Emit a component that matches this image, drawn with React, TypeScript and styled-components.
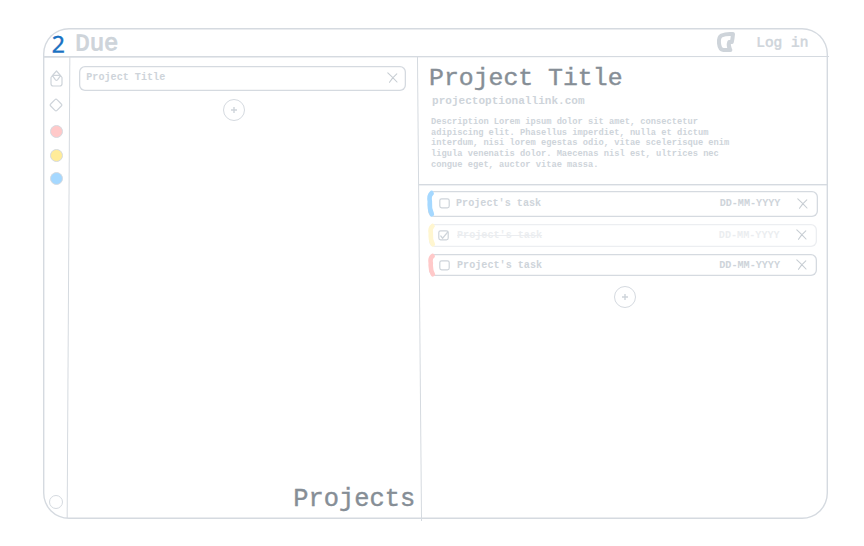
import React from 'react';
import styled, { createGlobalStyle } from 'styled-components';

const line = '#d5dae0';
const ink = '#ced4da';
const dark = '#868e96';

const GlobalStyle = createGlobalStyle`
  * { box-sizing: border-box; }
  body { margin: 0; background: #fff; font-family: "Liberation Mono", monospace; color: ${ink}; }
  h1, h2, p { margin: 0; font-weight: 400; }
`;

const Page = styled.div`
  width: 864px;
  height: 546px;
  padding: 28.4px 36px 27px 42.6px;
`;

const Frame = styled.div`
  width: 785.2px;
  height: 490.4px;
  border-radius: 26px;
  box-shadow: inset 0 0 0 1.4px ${line};
  padding: 1px;
  display: flex;
  flex-direction: column;
`;

const Header = styled.header`
  height: 27.2px;
  flex: none;
  display: flex;
  align-items: center;
  margin-right: -2px;
  box-shadow: 0 1.3px 0 ${line};
  transform: rotate(-0.06deg);
  white-space: pre;
`;

const Count = styled.span`
  width: 23.5px;
  margin-left: 7.8px;
  padding-top: 1px;
  font: 23px/28px "Noto Sans", sans-serif;
  color: #1971c2;
  -webkit-text-stroke: 0.4px #1971c2;
`;

const Brand = styled.span`
  flex: 1;
  font-size: 24px;
  line-height: 28px;
  -webkit-text-stroke: 0.9px ${ink};
  padding-top: 3px;
`;

const Login = styled.span`
  width: 73px;
  margin-left: 19px;
  font-size: 14.5px;
  -webkit-text-stroke: 0.5px ${ink};
`;

const Body = styled.div`
  flex: 1;
  min-height: 0;
  display: flex;
`;

const Rail = styled.aside`
  width: 24.6px;
  display: flex;
  flex-direction: column;
  align-items: center;
  gap: 11.5px;
  padding: 13px 0 8.5px 1px;
  svg { display: block; flex: none; }
`;

const Divider = styled.div<{ $slant: number; $extra?: number }>`
  width: 1.4px;
  flex: none;
  background: ${line};
  margin-bottom: ${p => -(p.$extra ?? 0)}px;
  transform: skewX(${p => p.$slant}deg);
`;

const Dot = styled.div<{ $color: string }>`
  width: 13px;
  height: 13px;
  flex: none;
  border: 1px solid ${line};
  border-radius: 50%;
  background: ${p => p.$color};
`;

const Dots = styled.div`
  display: flex;
  flex-direction: column;
  gap: 10.5px;
  margin-top: 1.5px;
`;

const RailFoot = styled(Dot)`
  margin-top: auto;
  width: 14px;
  height: 14px;
`;

const Projects = styled.section`
  width: 349.6px;
  display: flex;
  flex-direction: column;
  padding: 9.4px 0 0 9.2px;
`;

const ProjectCard = styled.div`
  width: 327px;
  height: 25px;
  flex: none;
  border-radius: 6px;
  box-shadow: inset 0 0 0 1.3px ${line};
  display: flex;
  align-items: center;
  padding: 0 7px 0 7.5px;
`;

const Label = styled.span<{ $struck?: boolean }>`
  flex: 1;
  font-size: 10.15px;
  font-weight: 700;
  line-height: 12px;
  text-decoration: ${p => (p.$struck ? 'line-through' : 'none')};
`;

const AddButton = styled.button<{ $left: number; $top: number }>`
  width: 22px;
  height: 22px;
  flex: none;
  padding: 0;
  display: grid;
  place-items: center;
  border: 1px solid ${line};
  border-radius: 50%;
  background: none;
  margin: ${p => p.$top}px 0 0 ${p => p.$left}px;
`;

const ProjectsTitle = styled.h2`
  margin: auto 0 2px 214.6px;
  font-size: 25.4px;
  line-height: 32px;
  color: ${dark};
  -webkit-text-stroke: 0.4px ${dark};
`;

const Details = styled.section`
  flex: 1;
  min-width: 0;
  margin-left: -1.5px;
  display: flex;
  flex-direction: column;
`;

const Summary = styled.div`
  height: 127.2px;
  flex: none;
  padding: 5.2px 0 0 10px;
  box-shadow: 0 1.4px 0 ${line};
`;

const Title = styled.h1`
  font-size: 24.8px;
  line-height: 32px;
  color: ${dark};
  -webkit-text-stroke: 0.4px ${dark};
`;

const Link = styled.p`
  font-size: 11.05px;
  line-height: 14px;
  margin-left: 3px;
  font-weight: 700;
`;

const Description = styled.p`
  margin: 9px 0 0 2px;
  font-size: 8.72px;
  line-height: 10.8px;
  font-weight: 700;
  white-space: pre;
`;

const Task = styled.div<{ $h: number; $top: number; $w: number; $border: string; $left: number }>`
  width: ${p => p.$w}px;
  height: ${p => p.$h}px;
  flex: none;
  margin: ${p => p.$top}px 0 0 ${p => p.$left}px;
  padding-right: 9px;
  border-radius: 6px;
  box-shadow: inset 0 0 0 1.3px ${p => p.$border};
  display: flex;
  align-items: center;
`;

const Marker = styled.svg`
  width: 8px;
  height: 100%;
  overflow: visible;
  flex: none;
`;

const Check = styled.span<{ $left: number }>`
  width: 11px;
  height: 11px;
  margin: 0 ${p => 8.8 - p.$left}px 0 ${p => p.$left}px;
  flex: none;
  svg { display: block; overflow: visible; }
`;

const TaskText = styled.div<{ $muted: boolean }>`
  flex: 1;
  display: flex;
  padding-top: 0.6px;
  opacity: ${p => (p.$muted ? 0.4 : 1)};
`;

const DateText = styled.span`
  width: 77px;
  font-size: 10.15px;
  font-weight: 700;
  line-height: 12px;
`;

const Cross = () => (
  <svg width="12" height="12" viewBox="0 0 12 12" fill="none" stroke="#c7cdd3" strokeWidth="1.1" strokeLinecap="round">
    <path d="M.8 .8Q5 4.5 10 10M9.8 1.8Q5.5 5.5 2.5 10.3" />
  </svg>
);

const Plus = () => (
  <svg width="8" height="8" viewBox="0 0 8 8" stroke={ink} strokeWidth="1.4">
    <path d="M4 1V7M1 4H7" />
  </svg>
);

const Logo = () => (
  <svg width="22" height="24" viewBox="0 0 22 24" fill="none" stroke={ink} strokeWidth="4" strokeLinecap="round" strokeLinejoin="round">
    <path d="M18 3.4Q11 2.8 6.5 4.8Q3.4 6.5 4 12.5Q4.6 18.8 8.5 19.4H15.4M18 3.4Q17.6 8 16.8 11.4H14.2Q13 14.6 15 19" />
  </svg>
);

const HomeIcon = () => (
  <svg width="13" height="17" viewBox="0 0 13 17" fill="none" stroke={ink} strokeWidth="1.2" strokeLinejoin="round">
    <path d="M6.5 1L2.8 5.2L1 7.5V13.8Q1 16 3.2 16H9.8Q12 16 12 13.8V7.5L10.2 5.2ZM2.8 5.4H10.2M2.6 5.8L5.5 9.8Q6.5 10.8 7.5 9.8L10.4 5.8" />
  </svg>
);

const DiamondIcon = () => (
  <svg width="14" height="14" viewBox="0 0 14 14" fill="none" stroke={ink} strokeWidth="1.2">
    <path d="M6 1.7Q7 .6 8 1.7L12.3 6Q13.4 7 12.3 8L8 12.3Q7 13.4 6 12.3L1.7 8Q.6 7 1.7 6Z" />
  </svg>
);

const tasks = [
  { color: '#a5d8ff', done: false, h: 25.5, top: 7.4, w: 389.4, left: 9.2, box: 3 },
  { color: '#fff6d0', done: true, h: 22.5, top: 7.5, w: 387.6, left: 10.2, box: 1.2 },
  { color: '#ffc9c9', done: false, h: 22.5, top: 7.3, w: 388, left: 10.2, box: 2.2 },
];

export default function App() {
  return (
    <>
      <GlobalStyle />
      <Page>
        <Frame>
          <Header>
            <Count>2</Count>
            <Brand>Due</Brand>
            <Logo />
            <Login>Log in</Login>
          </Header>
          <Body>
            <Rail>
              <HomeIcon />
              <DiamondIcon />
              <Dots>
                <Dot $color="#ffc9c9" />
                <Dot $color="#ffec99" />
                <Dot $color="#a5d8ff" />
              </Dots>
              <RailFoot $color="#fff" />
            </Rail>
            <Divider $slant={-0.33} />
            <Projects>
              <ProjectCard>
                <Label>Project Title</Label>
                <Cross />
              </ProjectCard>
              <AddButton $left={144.2} $top={8.4} aria-label="Add project"><Plus /></AddButton>
              <ProjectsTitle>Projects</ProjectsTitle>
            </Projects>
            <Divider $slant={0.5} $extra={3} />
            <Details>
              <Summary>
                <Title>Project Title</Title>
                <Link>projectoptionallink.com</Link>
                <Description>{`Description Lorem ipsum dolor sit amet, consectetur
adipiscing elit. Phasellus imperdiet, nulla et dictum
interdum, nisi lorem egestas odio, vitae scelerisque enim
ligula venenatis dolor. Maecenas nisl est, ultrices nec
congue eget, auctor vitae massa.`}</Description>
              </Summary>
              {tasks.map(t => (
                <Task key={t.color} $h={t.h} $top={t.top} $w={t.w} $left={t.left} $border={t.done ? '#eceef1' : line}>
                  <Marker viewBox="0 0 8 22" preserveAspectRatio="none">
                    <path d="M3.5 2Q0.8 4 1.8 9Q1.2 15 3.8 19.8" fill="none" stroke={t.color} strokeWidth="4.6" strokeLinecap="round" />
                  </Marker>
                  <Check $left={t.box}>
                    <svg width="11" height="11" viewBox="0 0 11 11" fill="none" stroke={ink} strokeWidth="1.2" strokeLinecap="round">
                      <rect x=".8" y=".8" width="9.4" height="9" rx="1.8" />
                      {t.done && <path d="M2.8 6L4.6 8.2L9.8 2" />}
                    </svg>
                  </Check>
                  <TaskText $muted={t.done}>
                    <Label $struck={t.done}>Project's task</Label>
                    <DateText>DD-MM-YYYY</DateText>
                  </TaskText>
                  <Cross />
                </Task>
              ))}
              <AddButton $left={194.6} $top={9.5} aria-label="Add task"><Plus /></AddButton>
            </Details>
          </Body>
        </Frame>
      </Page>
    </>
  );
}
